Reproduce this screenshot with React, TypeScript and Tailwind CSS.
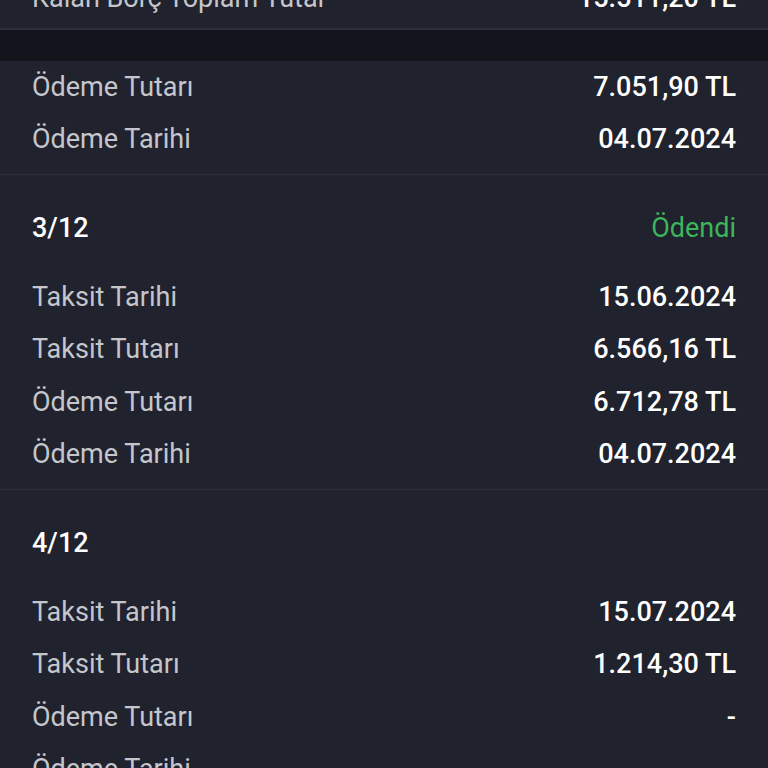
import React from "react";

type Row = { label: string; value: string };

function DataRow({ label, value }: Row) {
  return (
    <div className="flex h-[52.5px] items-center justify-between">
      <span className="text-[#c5c6cc]">{label}</span>
      <span className="font-medium text-white">{value}</span>
    </div>
  );
}

function Section({
  title,
  status,
  rows,
}: {
  title: string;
  status?: string;
  rows: Row[];
}) {
  return (
    <div className="border-b border-[#2c2e3a] px-[32px] pb-[8px] pt-[27px]">
      <div className="mb-[17px] flex h-[52px] items-center justify-between">
        <span className="font-medium text-white">{title}</span>
        {status && <span className="text-[#3cb65a]">{status}</span>}
      </div>
      {rows.map((r) => (
        <DataRow key={r.label} {...r} />
      ))}
    </div>
  );
}

export default function App() {
  return (
    <div
      className="h-[768px] w-[768px] overflow-hidden bg-[#20222d] text-[27px] leading-none"
      style={{ fontFamily: "Roboto, 'Noto Sans', sans-serif" }}
    >
      <div className="-mt-[24px] flex h-[54px] items-start justify-between border-b-2 border-[#2a2c37] px-[32px] pt-[9px]">
        <span className="text-[#c5c6cc]">Kalan Borç Toplam Tutar</span>
        <span className="font-medium text-white">15.511,20 TL</span>
      </div>
      <div className="h-[31px] bg-[#13131b]" />
      <div className="border-b border-[#2c2e3a] px-[32px] pb-[8px]">
        <DataRow label="Ödeme Tutarı" value="7.051,90 TL" />
        <DataRow label="Ödeme Tarihi" value="04.07.2024" />
      </div>
      <Section
        title="3/12"
        status="Ödendi"
        rows={[
          { label: "Taksit Tarihi", value: "15.06.2024" },
          { label: "Taksit Tutarı", value: "6.566,16 TL" },
          { label: "Ödeme Tutarı", value: "6.712,78 TL" },
          { label: "Ödeme Tarihi", value: "04.07.2024" },
        ]}
      />
      <Section
        title="4/12"
        rows={[
          { label: "Taksit Tarihi", value: "15.07.2024" },
          { label: "Taksit Tutarı", value: "1.214,30 TL" },
          { label: "Ödeme Tutarı", value: "-" },
          { label: "Ödeme Tarihi", value: "-" },
        ]}
      />
    </div>
  );
}
